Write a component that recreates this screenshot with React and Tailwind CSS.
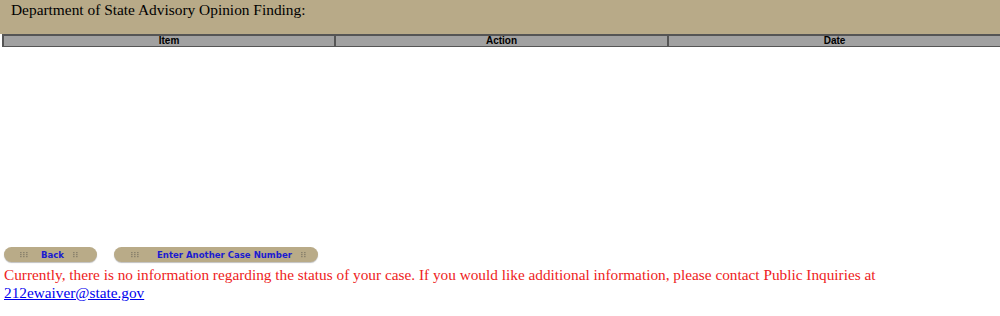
export default function App() {
  const Dots = ({ cols = 3 }) => (
    <svg width={cols === 3 ? 9 : 6} height="6" viewBox={cols === 3 ? "0 0 9 6" : "0 0 6 6"} className="shrink-0">
      {Array.from({ length: cols }).map((_, i) =>
        [0, 1, 2].map((j) => (
          <rect key={`${i}-${j}`} x={i * 3} y={j * 2} width="1.6" height="1.2" fill="#8a826c" />
        ))
      )}
    </svg>
  );
  const Btn = ({ label, w, pl, gap }) => (
    <div
      className="flex items-center h-[15px] rounded-full bg-[#b9ab88] shadow-[0_1px_1px_rgba(0,0,0,0.25)]"
      style={{ width: w }}
    >
      <div className="flex items-center" style={{ paddingLeft: pl }}>
        <Dots cols={3} />
      </div>
      <span
        className="font-bold text-[9.5px] leading-none text-[#1b1bd0]"
        style={{ fontFamily: "'DejaVu Sans Condensed', Tahoma, 'DejaVu Sans', sans-serif", marginLeft: gap }}
      >
        {label}
      </span>
      <div className="ml-[9px]">
        <Dots cols={2} />
      </div>
    </div>
  );
  return (
    <div className="w-[1000px] h-[316px] bg-white" style={{ fontFamily: "'Liberation Serif', 'Times New Roman', serif" }}>
      <div className="h-[34px] bg-[#b8aa88] pl-[11px] pt-[1px] text-[15.4px] leading-[18px] text-black">
        Department of State Advisory Opinion Finding:
      </div>
      <div className="ml-[2px] flex h-[13px] bg-[#a1a1a1] border-t-2 border-b border-l-2 border-[#555555]" style={{ fontFamily: "'Liberation Sans', Arial, sans-serif" }}>
        <div className="w-[332px] border-r-2 border-[#555555] text-center text-[10px] font-bold leading-[10px] text-black">Item</div>
        <div className="w-[333px] border-r-2 border-[#555555] text-center text-[10px] font-bold leading-[10px] text-black">Action</div>
        <div className="flex-1 text-center text-[10px] font-bold leading-[10px] text-black">Date</div>
      </div>
      <div className="h-[200px]" />
      <div className="flex gap-[17px] pl-[4px]">
        <Btn label="Back" w={93} pl={16} gap={12} />
        <Btn label="Enter Another Case Number" w={204} pl={17} gap={17} />
      </div>
      <p className="pl-[4px] pt-[4px] text-[15.3px] leading-[18px] text-[#ee2222]">
        Currently, there is no information regarding the status of your case. If you would like additional information, please contact Public Inquiries at{" "}
        <a href="#" className="text-[#0000ee] underline">212ewaiver@state.gov</a>
      </p>
    </div>
  );
}
